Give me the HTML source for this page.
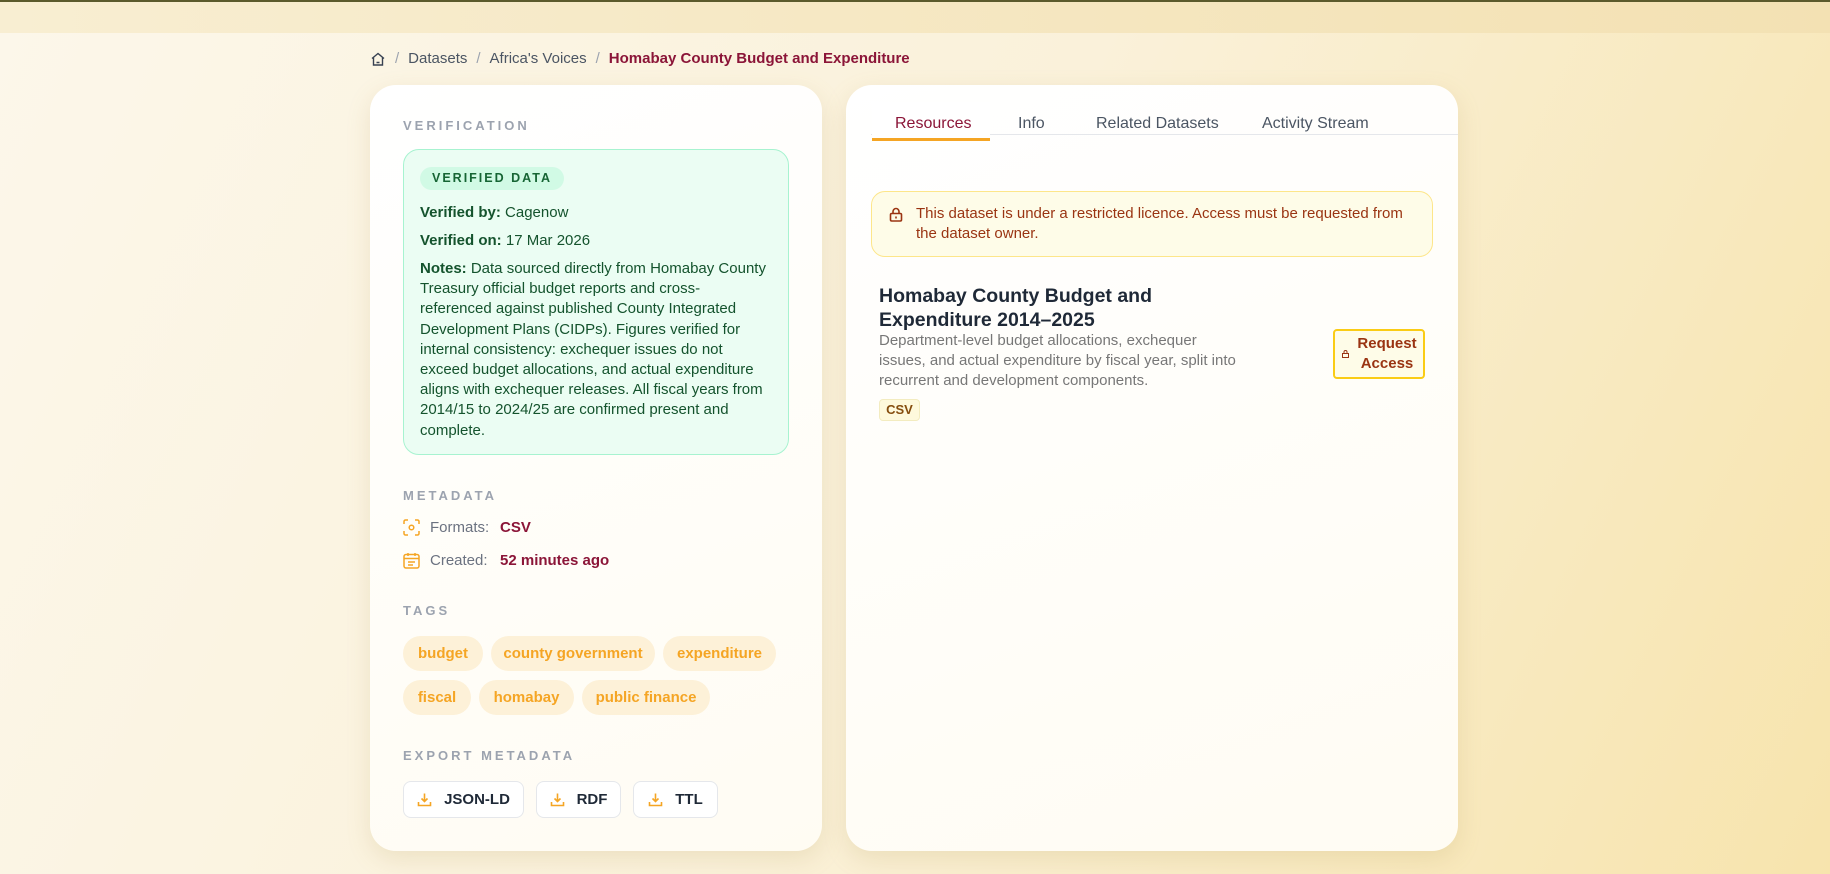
<!DOCTYPE html>
<html><head><meta charset="utf-8">
<style>
*{box-sizing:border-box;margin:0;padding:0}
body{width:1830px;height:874px;overflow:hidden;font-family:"Liberation Sans",sans-serif;background:linear-gradient(115deg,#fcf7ea 0%,#faf1da 50%,#f7e4ad 100%);position:relative}
.topbar{position:absolute;left:0;top:0;width:1830px;height:33px;background:linear-gradient(90deg,#f8eed2,#f3e1b3);border-top:2px solid #5b5a2c}
.abs{position:absolute}
.crumb{position:absolute;top:50px;left:370px;font-size:15px;color:#4b5563;display:flex;align-items:center;gap:0;white-space:nowrap}
.crumb .sep{color:#9ca3af;margin:0 9px}
.crumb b{color:#8b1538;font-weight:bold}
.card{position:absolute;top:85px;height:766px;background:linear-gradient(160deg,#ffffff,#fffcf3);border-radius:26px;box-shadow:0 8px 24px rgba(180,150,80,.18)}
.h{font-size:13px;letter-spacing:3px;color:#9ca3af;font-weight:bold;position:absolute}
.gbox{position:absolute;left:33px;top:64px;width:386px;height:306px;background:#ebfdf3;border:1px solid #a7f3d0;border-radius:16px;color:#14532d;font-size:15px}
.badge{position:absolute;left:16px;top:17px;height:23px;padding:0 12px;background:#d1fae5;border-radius:12px;font-size:12.5px;font-weight:bold;letter-spacing:2px;color:#166534;line-height:23px}
.gbox p{position:absolute;left:16px;width:360px;line-height:20.2px;color:#14532d;white-space:nowrap}
.meta{position:absolute;left:33px;font-size:15px;color:#6b7280;display:flex;align-items:center}
.meta .v{color:#8b1538;font-weight:bold}
.tag{position:absolute;height:35px;line-height:35px;background:#fdf1d8;color:#f5a524;border-radius:18px;font-size:15px;text-align:center;font-weight:bold}
.btn{position:absolute;top:696px;height:37px;border:1px solid #e5e7eb;border-radius:8px;background:#fff;font-size:15px;font-weight:bold;color:#1f2937;display:flex;align-items:center;justify-content:center;gap:12px}
.tab{position:absolute;top:30px;font-size:16px;color:#4b5563;font-weight:500}
</style></head><body>
<div class="topbar"></div>
<div class="crumb">
<svg width="16" height="16" viewBox="0 0 16 16" fill="none" stroke="#374151" stroke-width="1.4"><path d="M2 7.5L8 2.5l6 5M3.5 6.5V14h9V6.5M6.5 11.5h3"/></svg>
<span class="sep">/</span><span>Datasets</span><span class="sep">/</span><span>Africa's Voices</span><span class="sep">/</span><b>Homabay County Budget and Expenditure</b>
</div>

<div class="card" style="left:370px;width:452px">
<div class="h" style="left:33px;top:33px">VERIFICATION</div>
<div class="gbox">
<div class="badge">VERIFIED DATA</div>
<p style="top:53px"><b>Verified by:</b> Cagenow</p>
<p style="top:81px"><b>Verified on:</b> 17 Mar 2026</p>
<p style="top:109px"><b>Notes:</b> Data sourced directly from Homabay County<br>Treasury official budget reports and cross-<br>referenced against published County Integrated<br>Development Plans (CIDPs). Figures verified for<br>internal consistency: exchequer issues do not<br>exceed budget allocations, and actual expenditure<br>aligns with exchequer releases. All fiscal years from<br>2014/15 to 2024/25 are confirmed present and<br>complete.</p>
</div>
<div class="h" style="left:33px;top:403px">METADATA</div>
<div class="meta" style="top:434px"><svg width="17" height="17" viewBox="0 0 17 17" fill="none" stroke="#f5a524" stroke-width="1.5"><path d="M1 5V2.5A1.5 1.5 0 0 1 2.5 1H5M12 1h2.5A1.5 1.5 0 0 1 16 2.5V5M16 12v2.5a1.5 1.5 0 0 1-1.5 1.5H12M5 16H2.5A1.5 1.5 0 0 1 1 14.5V12"/><circle cx="8.5" cy="8.5" r="2.3"/></svg><span style="margin-left:10px;width:70px">Formats:</span><span class="v">CSV</span></div>
<div class="meta" style="top:467px"><svg width="17" height="17" viewBox="0 0 17 17" fill="none" stroke="#f5a524" stroke-width="1.5"><rect x="1" y="2.5" width="15" height="13.5" rx="2"/><path d="M1 6.5h15M5 1v3M12 1v3M5 10h7M5 13h5"/></svg><span style="margin-left:10px;width:70px">Created:</span><span class="v">52 minutes ago</span></div>
<div class="h" style="left:33px;top:518px">TAGS</div>
<div class="tag" style="left:33px;top:551px;width:80px">budget</div>
<div class="tag" style="left:121px;top:551px;width:164px">county government</div>
<div class="tag" style="left:293px;top:551px;width:113px">expenditure</div>
<div class="tag" style="left:33px;top:595px;width:68px">fiscal</div>
<div class="tag" style="left:109px;top:595px;width:95px">homabay</div>
<div class="tag" style="left:212px;top:595px;width:128px">public finance</div>
<div class="h" style="left:33px;top:663px">EXPORT METADATA</div>
<div class="btn" style="left:33px;width:121px"><svg width="15" height="15" viewBox="0 0 15 15" fill="none" stroke="#f5a524" stroke-width="1.6"><path d="M7.5 1.5v8M4.5 6.5l3 3 3-3M1.5 10v3.5h12V10"/></svg>JSON-LD</div>
<div class="btn" style="left:166px;width:85px"><svg width="15" height="15" viewBox="0 0 15 15" fill="none" stroke="#f5a524" stroke-width="1.6"><path d="M7.5 1.5v8M4.5 6.5l3 3 3-3M1.5 10v3.5h12V10"/></svg>RDF</div>
<div class="btn" style="left:263px;width:85px"><svg width="15" height="15" viewBox="0 0 15 15" fill="none" stroke="#f5a524" stroke-width="1.6"><path d="M7.5 1.5v8M4.5 6.5l3 3 3-3M1.5 10v3.5h12V10"/></svg>TTL</div>
</div>

<div class="card" style="left:846px;width:612px">
<div class="abs" style="left:25px;top:49px;width:587px;height:1px;background:#e5e7eb"></div>
<div class="abs" style="left:26px;top:17px;width:118px;height:39px;background:#fff;border-bottom:3px solid #f5a524"></div>
<div class="tab" style="left:49px;color:#8b1538">Resources</div>
<div class="tab" style="left:172px">Info</div>
<div class="tab" style="left:250px">Related Datasets</div>
<div class="tab" style="left:416px">Activity Stream</div>
<div class="abs" style="left:25px;top:106px;width:562px;height:66px;background:#fefce8;border:1px solid #fde68a;border-radius:14px;color:#9a3412;font-size:15px;line-height:20px">
<svg class="abs" style="left:17px;top:15px" width="14" height="15" viewBox="0 0 14 15" fill="none" stroke="#9a3412" stroke-width="1.6"><rect x="1.5" y="6.5" width="11" height="7.5" rx="1.2"/><path d="M4 6.5V4.5a3 3 0 0 1 6 0v2M7 9.5v2"/></svg>
<div class="abs" style="left:44px;top:12px;width:500px">This dataset is under a restricted licence. Access must be requested from the dataset owner.</div>
</div>
<div class="abs" style="left:33px;top:199px;font-size:19.5px;font-weight:bold;color:#1f2937;line-height:24px;width:330px">Homabay County Budget and Expenditure 2014–2025</div>
<div class="abs" style="left:33px;top:246px;font-size:15px;color:#777;line-height:20px;white-space:nowrap">Department-level budget allocations, exchequer<br>issues, and actual expenditure by fiscal year, split into<br>recurrent and development components.</div>
<div class="abs" style="left:33px;top:314px;width:41px;height:22px;background:#fef9dc;border:1px solid #f3ecc0;border-radius:4px;font-size:13px;font-weight:bold;color:#854d0e;text-align:center;line-height:20px">CSV</div>
<div class="abs" style="left:487px;top:244px;width:92px;height:50px;background:#fefce8;border:2px solid #facc15;border-radius:4px;color:#9a3412;font-size:15px;font-weight:bold;line-height:20px;text-align:center;padding-left:16px;padding-top:3px">
<svg class="abs" style="left:7px;top:19px" width="7" height="8" viewBox="0 0 7 8" fill="none" stroke="#9a3412" stroke-width="1"><rect x=".5" y="3.5" width="6" height="4"/><path d="M2 3.5V2a1.5 1.5 0 0 1 3 0v1.5"/></svg>
Request<br>Access</div>
</div>
</body></html>
